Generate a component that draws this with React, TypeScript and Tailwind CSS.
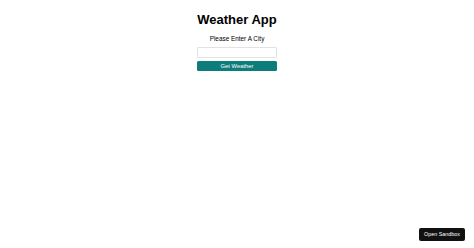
export default function App() {
  return (
    <div className="relative min-h-[248px] w-full bg-white font-['Liberation_Sans',Arial,sans-serif]">
      <div className="flex flex-col items-center pt-[12px]">
        <h1 className="text-[13px] font-bold leading-[15px] text-black">Weather App</h1>
        <p className="mt-[8px] text-[6.4px] leading-[8px] text-black">Please Enter A City</p>
        <input
          type="text"
          className="mt-[4px] h-[11px] w-[80px] rounded-[1px] border border-[#e2e2e2] bg-white"
        />
        <button className="mt-[3px] h-[10px] w-[80px] rounded-[1.5px] bg-[#0e7c7b] text-[5.8px] leading-[10px] text-white">
          Get Weather
        </button>
      </div>
      <button className="absolute bottom-[7px] right-[9px] h-[13px] rounded-[2px] bg-[#111111] px-[5px] text-[5.4px] leading-[13px] text-white">
        Open Sandbox
      </button>
    </div>
  );
}
